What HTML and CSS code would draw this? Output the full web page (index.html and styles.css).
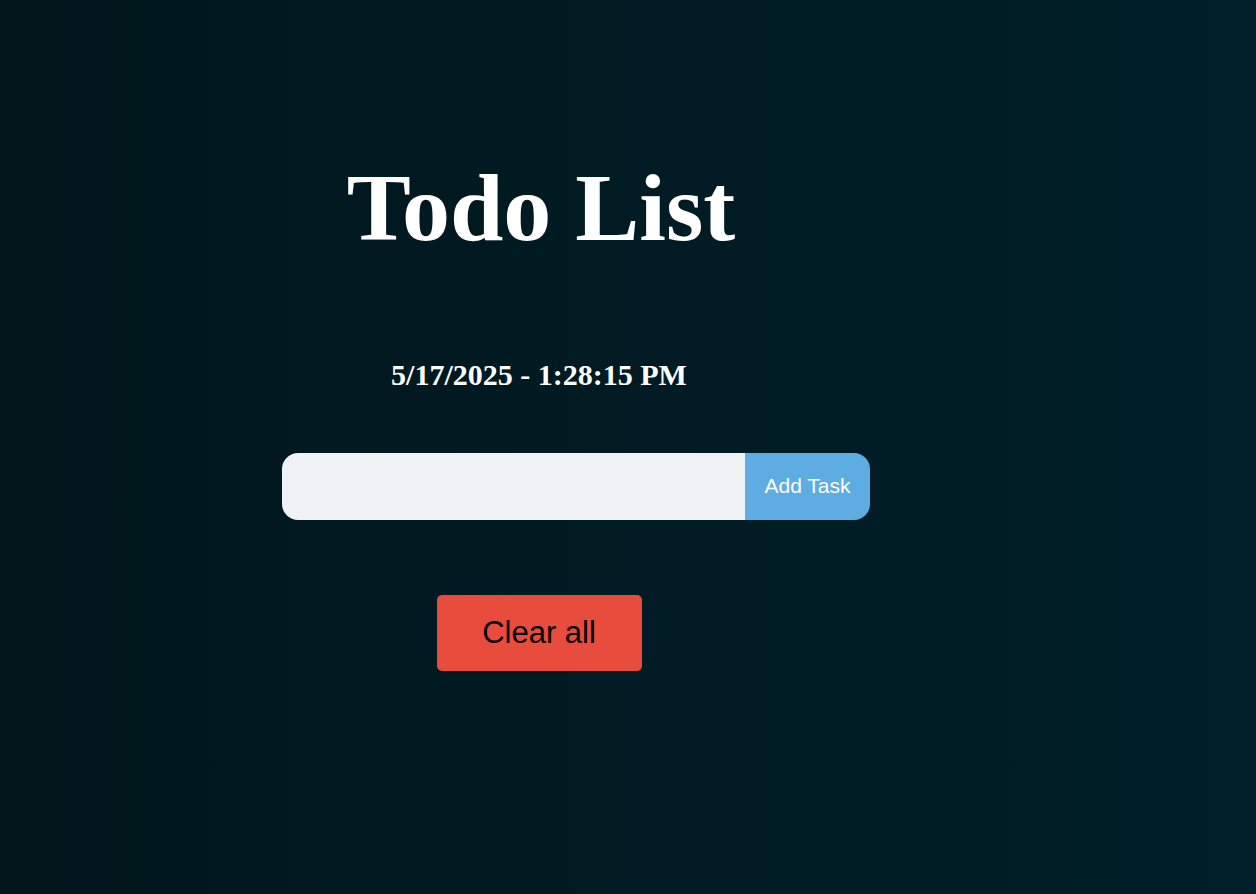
FILE: index.html
```html
<!DOCTYPE html>
<html lang="en">
<head>
<meta charset="utf-8">
<title>Todo List</title>
<link rel="stylesheet" href="styles.css">
</head>
<body>
<main class="app">
  <h1 class="title">Todo List</h1>
  <h2 class="clock">5/17/2025 - 1:28:15 PM</h2>
  <div class="add-row">
    <input class="task-input" type="text" aria-label="New task">
    <button class="add-btn" type="button">Add Task</button>
  </div>
  <button class="clear-btn" type="button">Clear all</button>
</main>
</body>
</html>
```

FILE: styles.css
```css
html, body {
  margin: 0;
  padding: 0;
  height: 100%;
}

body {
  background: linear-gradient(to right, #01161b 0%, #001b23 50%, #001f28 100%);
  font-family: "Liberation Serif", "Times New Roman", serif;
  color: #ffffff;
  min-height: 894px;
}

.app {
  width: 1078px;
  padding-top: 155px;
  display: flex;
  flex-direction: column;
  align-items: center;
}

.title {
  margin: 0 0 0 4px;
  font-size: 96px;
  line-height: 1.1;
  font-weight: bold;
  color: #ffffff;
}

.clock {
  margin: 97px 0 0 0;
  font-size: 30px;
  line-height: 1.1;
  font-weight: bold;
  color: #ffffff;
}

.add-row {
  align-self: flex-start;
  margin: 62px 0 0 282px;
  display: flex;
  height: 67px;
}

.task-input {
  width: 463px;
  height: 67px;
  box-sizing: border-box;
  border: none;
  outline: none;
  background: #f1f2f4;
  border-radius: 16px 0 0 16px;
  padding: 0 16px;
  font-family: "Liberation Sans", Arial, sans-serif;
  font-size: 20px;
}

.add-btn {
  width: 125px;
  height: 67px;
  border: none;
  background: #5dade2;
  color: #ffffff;
  border-radius: 0 16px 16px 0;
  font-family: "Liberation Sans", Arial, sans-serif;
  font-size: 21px;
  padding: 0;
}

.clear-btn {
  margin-top: 75px;
  width: 205px;
  height: 76px;
  border: none;
  border-radius: 5px;
  background: #e74c3c;
  color: #000000;
  font-family: "Liberation Sans", Arial, sans-serif;
  font-size: 31px;
  padding: 0;
}
```
